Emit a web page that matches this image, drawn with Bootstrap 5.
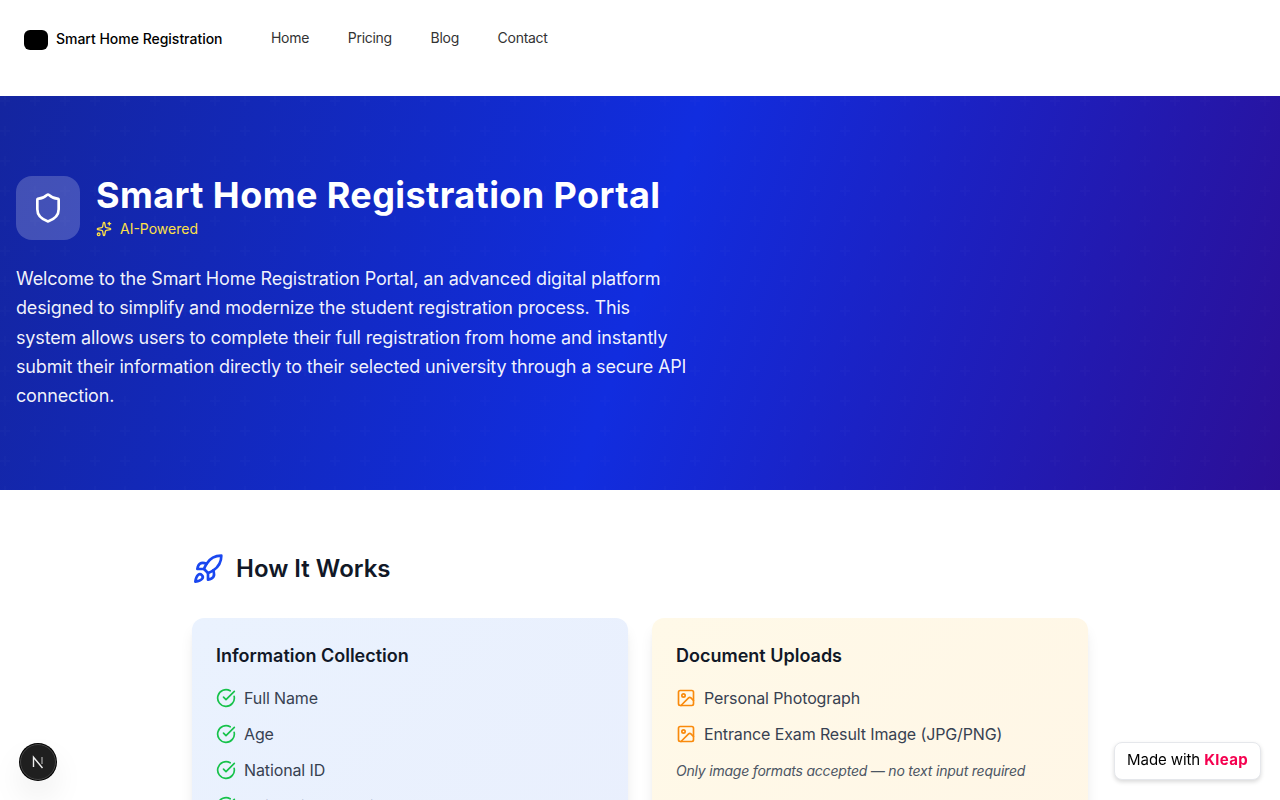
<!DOCTYPE html>
<html lang="en">
<head>
  <meta charset="UTF-8">
  <meta name="viewport" content="width=device-width, initial-scale=1.0">
  <title>Smart Home Registration</title>
  <link rel="stylesheet" href="https://cdn.jsdelivr.net/npm/bootstrap@5.3.0/dist/css/bootstrap.min.css">
  <style>
    body { font-family: Inter, "Liberation Sans", sans-serif; color: #111827; overflow: hidden; height: 800px; }
    .top-bar { height: 96px; padding: 29px 24px 0; }
    .logo-box { width: 24px; height: 20px; background: #000; border-radius: 6px; margin-top: 1px; }
    .brand-name { font-size: 14px; font-weight: 500; color: #000; line-height: 20px; letter-spacing: -.02px; position: relative; top: -1px; }
    .top-links { margin-left: 48.5px; gap: 38.6px; margin-top: -1px; }
    .top-links a { font-size: 14px; line-height: 20px; color: #333; text-decoration: none; letter-spacing: -.27px; }
    .hero {
      height: 394px; padding: 80px 16px 0; color: #fff;
      background-color: #112ddf;
      background-image:
        url("data:image/svg+xml,%3Csvg xmlns='http://www.w3.org/2000/svg' width='30' height='30'%3E%3Cpath fill='%23fff' fill-opacity='.013' d='M4 0h2v4h4v2H6v4H4V6H0V4h4z'/%3E%3C/svg%3E"),
        linear-gradient(108deg, #14259f 0%, #112ddf 50%, #2c0f96 100%);
    }
    .hero-icon { width: 64px; height: 64px; border-radius: 16px; background: rgba(255,255,255,.2); }
    .hero-title { font-size: 36px; font-weight: 700; line-height: 40px; margin: -2px 0 0; letter-spacing: .41px; }
    .ai-tag { font-size: 14px; line-height: 20px; color: #fde047; margin-top: 4px; }
    .hero-text { font-size: 18px; line-height: 29.25px; max-width: 672px; color: rgba(255,255,255,.95); margin: 24px 0 0; letter-spacing: -.16px; }
    .steps { width: 896px; margin: 0 auto; padding-top: 61px; }
    .steps-title { font-size: 24px; font-weight: 600; line-height: 36px; margin: 0; color: #111827; }
    .card-grid { display: grid; grid-template-columns: 1fr 1fr; gap: 24px; margin-top: 31px; }
    .step-box { border-radius: 12px; padding: 24px; height: 300px; box-shadow: 0 10px 15px -3px rgba(0,0,0,.1), 0 4px 6px -4px rgba(0,0,0,.1); }
    .box-blue { background: linear-gradient(135deg, #eaf2fe, #e9effd); }
    .box-amber { background: linear-gradient(135deg, #fff9e8, #fff6e6); }
    .box-title { font-size: 18px; font-weight: 600; line-height: 28px; margin: 0 0 10px; color: #111827; }
    .step-item { height: 36px; gap: 8px; font-size: 16px; color: #374151; letter-spacing: -.12px; }
    .step-note { font-size: 14px; font-style: italic; color: #4b5563; margin: 8px 0 0; letter-spacing: -.21px; }
    .kleap-tag { position: fixed; right: 19px; bottom: 20px; height: 38px; padding: 0 12px 2px; background: #fff; border: 1px solid #e5e7eb; border-radius: 8px; font-size: 15px; color: #000; box-shadow: 0 2px 4px rgba(0,0,0,.15); letter-spacing: -.1px; }
    .kleap-tag b { color: #f5004f; font-weight: 700; letter-spacing: .35px; }
    .next-dot { position: fixed; left: 20px; bottom: 20px; width: 36px; height: 36px; border-radius: 50%; background: #1f1f1f; border: 1px solid #444; box-shadow: 0 0 0 1px #000, 0 16px 32px rgba(0,0,0,.08); }
  </style>
</head>
<body>
  <nav class="top-bar d-flex align-items-start bg-white">
    <div class="d-flex align-items-center gap-2">
      <div class="logo-box"></div>
      <span class="brand-name">Smart Home Registration</span>
    </div>
    <div class="top-links d-flex">
      <a href="#">Home</a>
      <a href="#">Pricing</a>
      <a href="#">Blog</a>
      <a href="#">Contact</a>
    </div>
  </nav>

  <section class="hero">
    <div class="d-flex align-items-center gap-3">
      <div class="hero-icon d-flex align-items-center justify-content-center">
        <svg width="32" height="32" viewBox="0 0 24 24" fill="none" stroke="#fff" stroke-width="2" stroke-linecap="round" stroke-linejoin="round"><path d="M20 13c0 5-3.5 7.5-7.66 8.95a1 1 0 0 1-.67-.01C7.5 20.5 4 18 4 13V6a1 1 0 0 1 1-1c2 0 4.5-1.2 6.24-2.72a1.17 1.17 0 0 1 1.52 0C14.51 3.81 17 5 19 5a1 1 0 0 1 1 1z"/></svg>
      </div>
      <div>
        <h1 class="hero-title">Smart Home Registration Portal</h1>
        <div class="ai-tag d-flex align-items-center gap-2">
          <svg width="16" height="16" viewBox="0 0 24 24" fill="none" stroke="#fde047" stroke-width="2" stroke-linecap="round" stroke-linejoin="round"><path d="M11.017 2.814a1 1 0 0 1 1.966 0l1.051 5.558a2 2 0 0 0 1.594 1.594l5.558 1.051a1 1 0 0 1 0 1.966l-5.558 1.051a2 2 0 0 0-1.594 1.594l-1.051 5.558a1 1 0 0 1-1.966 0l-1.051-5.558a2 2 0 0 0-1.594-1.594l-5.558-1.051a1 1 0 0 1 0-1.966l5.558-1.051a2 2 0 0 0 1.594-1.594z"/><path d="M20 2v4"/><path d="M22 4h-4"/><circle cx="4" cy="20" r="2"/></svg>
          <span>AI-Powered</span>
        </div>
      </div>
    </div>
    <p class="hero-text">Welcome to the Smart Home Registration Portal, an advanced digital platform designed to simplify and modernize the student registration process. This system allows users to complete their full registration from home and instantly submit their information directly to their selected university through a secure API connection.</p>
  </section>

  <section class="steps">
    <div class="d-flex align-items-center gap-2">
      <svg width="32" height="32" class="me-1" viewBox="0 0 24 24" fill="none" stroke="#1a47f0" stroke-width="2" stroke-linecap="round" stroke-linejoin="round"><path d="M4.5 16.5c-1.5 1.26-2 5-2 5s3.74-.5 5-2c.71-.84.7-2.13-.09-2.91a2.18 2.18 0 0 0-2.91-.09z"/><path d="m12 15-3-3a22 22 0 0 1 2-3.95A12.88 12.88 0 0 1 22 2c0 2.72-.78 7.5-6 11a22.35 22.35 0 0 1-4 2z"/><path d="M9 12H4s.55-3.03 2-4c1.62-1.08 5 0 5 0"/><path d="M12 15v5s3.03-.55 4-2c1.08-1.62 0-5 0-5"/></svg>
      <h2 class="steps-title">How It Works</h2>
    </div>
    <div class="card-grid">
      <div class="step-box box-blue">
        <h3 class="box-title">Information Collection</h3>
        <div class="step-item d-flex align-items-center"><svg width="20" height="20" viewBox="0 0 24 24" fill="none" stroke="#16c24a" stroke-width="2" stroke-linecap="round" stroke-linejoin="round"><path d="M21.801 10A10 10 0 1 1 17 3.335"/><path d="m9 11 3 3L22 4"/></svg><span>Full Name</span></div>
        <div class="step-item d-flex align-items-center"><svg width="20" height="20" viewBox="0 0 24 24" fill="none" stroke="#16c24a" stroke-width="2" stroke-linecap="round" stroke-linejoin="round"><path d="M21.801 10A10 10 0 1 1 17 3.335"/><path d="m9 11 3 3L22 4"/></svg><span>Age</span></div>
        <div class="step-item d-flex align-items-center"><svg width="20" height="20" viewBox="0 0 24 24" fill="none" stroke="#16c24a" stroke-width="2" stroke-linecap="round" stroke-linejoin="round"><path d="M21.801 10A10 10 0 1 1 17 3.335"/><path d="m9 11 3 3L22 4"/></svg><span>National ID</span></div>
        <div class="step-item d-flex align-items-center"><svg width="20" height="20" viewBox="0 0 24 24" fill="none" stroke="#16c24a" stroke-width="2" stroke-linecap="round" stroke-linejoin="round"><path d="M21.801 10A10 10 0 1 1 17 3.335"/><path d="m9 11 3 3L22 4"/></svg><span>University Selection</span></div>
      </div>
      <div class="step-box box-amber">
        <h3 class="box-title">Document Uploads</h3>
        <div class="step-item d-flex align-items-center"><svg width="20" height="20" viewBox="0 0 24 24" fill="none" stroke="#f98a0c" stroke-width="2" stroke-linecap="round" stroke-linejoin="round"><rect x="3" y="3" width="18" height="18" rx="2"/><circle cx="9" cy="9" r="2"/><path d="m21 15-3.086-3.086a2 2 0 0 0-2.828 0L6 21"/></svg><span>Personal Photograph</span></div>
        <div class="step-item d-flex align-items-center"><svg width="20" height="20" viewBox="0 0 24 24" fill="none" stroke="#f98a0c" stroke-width="2" stroke-linecap="round" stroke-linejoin="round"><rect x="3" y="3" width="18" height="18" rx="2"/><circle cx="9" cy="9" r="2"/><path d="m21 15-3.086-3.086a2 2 0 0 0-2.828 0L6 21"/></svg><span>Entrance Exam Result Image (JPG/PNG)</span></div>
        <p class="step-note">Only image formats accepted — no text input required</p>
      </div>
    </div>
  </section>

  <div class="next-dot d-flex align-items-center justify-content-center">
    <svg width="16" height="16" viewBox="0 0 16 16" fill="none" stroke="#eee" stroke-width="1.4"><path d="M3.5 13V3.2L12.5 14"/><path d="M12 3v7" stroke="#999"/></svg>
  </div>
  <div class="kleap-tag d-flex align-items-center"><span>Made with&nbsp;<b>Kleap</b></span></div>

  <script src="https://cdn.jsdelivr.net/npm/bootstrap@5.3.0/dist/js/bootstrap.bundle.min.js"></script>
</body>
</html>
